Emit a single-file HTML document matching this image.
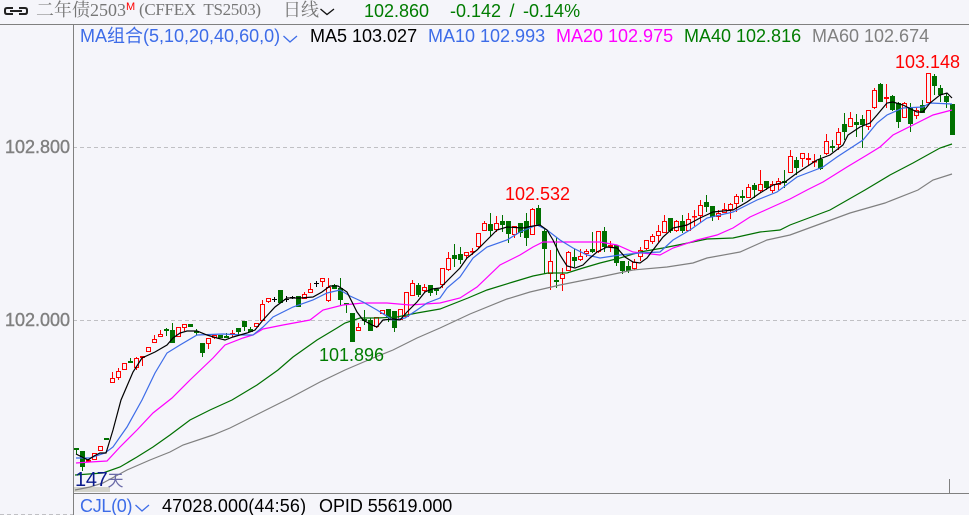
<!DOCTYPE html>
<html><head><meta charset="utf-8"><style>
html,body{margin:0;padding:0;background:#f5f5fa}
#p{position:relative;width:969px;height:515px;overflow:hidden;background:#f5f5fa;font-family:"Liberation Sans","Noto Sans CJK SC",sans-serif}
.t{position:absolute;white-space:pre;font-size:18px;line-height:20px;color:#000}
.s{font-family:"Liberation Serif","Noto Serif CJK SC",serif;color:#777}
.b{color:#3d6ce8}.m{color:#ff00ff}.g{color:#007c00}.y{color:#808080}.r{color:#f00}
svg{position:absolute;left:0;top:0}
</style></head><body><div id="p">
<svg width="969" height="515" viewBox="0 0 969 515" fill="none">
<path d="M73 147.500H969M73 320.500H969M0 514.500H73" stroke="#c0c0c4" stroke-width="1" stroke-dasharray="4 3"/>
<rect x="74" y="487" width="36" height="5" fill="#d4d4cc"/>
<path shape-rendering="crispEdges" stroke="#808080" d="M0 24.500H969M73.500 24V515M73 493.500H969M949.500 479V493"/>
<path d="M13 8H7Q5 8 5 10V12Q5 14 7 14H13M19 8H25Q27 8 27 10V12Q27 14 25 14H19M10 11H22" stroke="#222" stroke-width="2"/>
<path d="M320.500 9L327 14.500L334 9" stroke="#111" stroke-width="1.300"/>
<path d="M283.500 36L290 42L297 36" stroke="#3d6ce8" stroke-width="1.300"/>
<path d="M135.500 505L142 511L149 505" stroke="#3d6ce8" stroke-width="1.300"/>

<g shape-rendering="crispEdges">
<!-- green wicks -->
<path stroke="#007000" d="M76.500 448V454M82.500 451V471M130.500 358V363M166.500 328V336M172.500 323V343M196.500 329V335M202.500 343V357M226.500 333V338M238.500 328V335M244.500 321V331M250.500 327V332M334.500 284V289M340.500 278V305M346.500 303V313M364.500 310V325M370.500 318V331M388.500 309V322M394.500 311V332M418.500 283V297M430.500 285V296M436.500 289V295M454.500 244V267M460.500 247V264M490.500 213V237M502.500 215V232M508.500 221V243M520.500 223V237M526.500 213V246M538.500 205V225M544.500 228V274M556.500 237V288M574.500 249V267M592.500 232V253M604.500 227V252M616.500 245V266M622.500 261V274M628.500 261V273M670.500 218V233M682.500 215V233M706.500 195V212M712.500 206V221M742.500 190V202M754.500 183V198M766.500 181V190M784.500 170V188M796.500 157V175M820.500 155V170M832.500 140V152M844.500 113V140M856.500 114V137M862.500 115V148M880.500 83V102M892.500 95V111M898.500 102V128M910.500 103V132M922.500 100V113M934.500 74V95M940.500 85V102M946.500 93V108"/>
<!-- black crosses -->
<path stroke="#000" d="M272 299.500H277M274.500 297V302M284 299.500H289M286.500 296V302M290 297.500H295M292.500 296V299M314 283.500H319M316.500 281V287"/>
<!-- green bodies -->
<path fill="#007000" d="M74 448h5v2h-5zM80 451h5v16h-5zM104 438h5v2h-5zM128 361h5v2h-5zM164 329h5v2h-5zM170 330h5v13h-5zM188 324h5v3h-5zM194 331h5v2h-5zM200 343h5v10h-5zM218 335h5v3h-5zM224 336h5v2h-5zM236 328h5v4h-5zM242 321h5v6h-5zM248 329h5v3h-5zM278 290h5v13h-5zM296 296h5v11h-5zM332 285h5v4h-5zM338 288h5v12h-5zM344 303h5v2h-5zM350 313h5v29h-5zM362 319h5v2h-5zM368 320h5v11h-5zM386 309h5v8h-5zM392 311h5v17h-5zM416 285h5v10h-5zM428 285h5v8h-5zM434 289h5v2h-5zM452 255h5v4h-5zM458 254h5v6h-5zM488 224h5v7h-5zM500 221h5v4h-5zM506 221h5v13h-5zM518 223h5v10h-5zM524 221h5v17h-5zM536 208h5v17h-5zM542 231h5v18h-5zM554 280h5v2h-5zM572 257h5v4h-5zM590 249h5v3h-5zM602 231h5v16h-5zM614 245h5v18h-5zM620 261h5v10h-5zM626 266h5v5h-5zM668 218h5v13h-5zM680 221h5v10h-5zM704 202h5v5h-5zM710 206h5v11h-5zM740 196h5v2h-5zM752 185h5v5h-5zM764 181h5v7h-5zM782 181h5v2h-5zM794 160h5v8h-5zM818 159h5v10h-5zM830 146h5v2h-5zM842 124h5v8h-5zM854 122h5v3h-5zM860 119h5v6h-5zM878 84h5v18h-5zM890 96h5v14h-5zM896 103h5v19h-5zM908 108h5v16h-5zM920 105h5v8h-5zM932 76h5v10h-5zM938 88h5v7h-5zM944 96h5v6h-5zM950 104h5v31h-5z"/>
<!-- red wicks -->
<path stroke="#f00" d="M88.500 459V462M112.500 372V383M118.500 368V380M136.500 357V370M142.500 356V366M154.500 335V343M160.500 330V337M184.500 324V331M208.500 338V349M214.500 335V339M232.500 330V337M262.500 300V321M268.500 298V303M304.500 292V299M310.500 283V293M322.500 278V287M328.500 278V302M358.500 323V331M376.500 317V328M412.500 280V296M424.500 284V292M442.500 268V288M448.500 252V271M466.500 252V259M472.500 248V255M478.500 233V249M484.500 221V231M496.500 216V232M514.500 226V238M532.500 208V235M550.500 250V290M562.500 268V291M568.500 251V271M580.500 249V261M586.500 249V257M598.500 231V253M610.500 241V252M634.500 259V270M640.500 247V261M646.500 240V250M652.500 234V244M658.500 225V242M664.500 215V233M676.500 220V232M688.500 213V231M694.500 210V226M700.500 200V223M718.500 210V220M724.500 203V213M730.500 203V219M736.500 194V212M748.500 184V198M760.500 170V193M772.500 181V193M778.500 178V190M790.500 150V173M802.500 153V167M808.500 153V165M814.500 154V167M826.500 134V155M838.500 128V150M850.500 112V127M868.500 110V130M874.500 88V109M886.500 84V108M904.500 102V118M916.500 107V119M928.500 73V103"/>
<!-- red bodies -->
<path fill="#f5f5fa" stroke="#f00" d="M86.500 460.500h4v1h-4zM92.500 453.500h4v6h-4zM98.500 446.500h4v4h-4zM110.500 378.500h4v4h-4zM116.500 371.500h4v6h-4zM122.500 363.500h4v6h-4zM134.500 358.500h4v9h-4zM140.500 356.500h4v1h-4zM146.500 347.500h4v4h-4zM152.500 339.500h4v3h-4zM158.500 334.500h4v2h-4zM176.500 327.500h4v9h-4zM182.500 324.500h4v3h-4zM206.500 338.500h4v5h-4zM212.500 335.500h4v2h-4zM230.500 333.500h4v1h-4zM254.500 323.500h4v3h-4zM260.500 304.500h4v16h-4zM266.500 298.500h4v3h-4zM302.500 294.500h4v4h-4zM308.500 289.500h4v3h-4zM320.500 278.500h4v3h-4zM326.500 287.500h4v13h-4zM356.500 327.500h4v3h-4zM374.500 317.500h4v9h-4zM380.500 310.500h4v3h-4zM398.500 309.500h4v10h-4zM404.500 292.500h4v24h-4zM410.500 283.500h4v12h-4zM422.500 287.500h4v3h-4zM440.500 268.500h4v16h-4zM446.500 258.500h4v11h-4zM464.500 252.500h4v3h-4zM470.500 251.500h4v0.500h-4zM476.500 233.500h4v13h-4zM482.500 223.500h4v7h-4zM494.500 223.500h4v6h-4zM512.500 226.500h4v8h-4zM530.500 209.500h4v25h-4zM548.500 261.500h4v12h-4zM560.500 274.500h4v4h-4zM566.500 252.500h4v18h-4zM578.500 256.500h4v3h-4zM584.500 251.500h4v2h-4zM596.500 231.500h4v20h-4zM608.500 245.500h4v1h-4zM632.500 262.500h4v6h-4zM638.500 250.500h4v6h-4zM644.500 240.500h4v8h-4zM650.500 236.500h4v5h-4zM656.500 231.500h4v4h-4zM662.500 221.500h4v11h-4zM674.500 221.500h4v9h-4zM686.500 219.500h4v11h-4zM692.500 216.500h4v0.500h-4zM698.500 205.500h4v10h-4zM716.500 213.500h4v3h-4zM722.500 209.500h4v3h-4zM728.500 204.500h4v5h-4zM734.500 196.500h4v7h-4zM746.500 187.500h4v10h-4zM758.500 184.500h4v6h-4zM770.500 184.500h4v6h-4zM776.500 181.500h4v3h-4zM788.500 156.500h4v16h-4zM800.500 153.500h4v5h-4zM806.500 158.500h4v1h-4zM812.500 161.500h4v0.500h-4zM824.500 141.500h4v12h-4zM836.500 132.500h4v12h-4zM848.500 118.500h4v8h-4zM866.500 110.500h4v16h-4zM872.500 90.500h4v17h-4zM884.500 97.500h4v1h-4zM902.500 103.500h4v14h-4zM914.500 110.500h4v5h-4zM926.500 73.500h4v29h-4z"/>
</g>

<!-- MA60 -->
<polyline stroke="#808080" stroke-width="1.200" points="75,490 90,487 103,483 127,470 150,460 170,452 183,445 213,435 230,428 260,413 290,398 320,382 345,370 373,358 393,350 417,338 440,328 470,314 507,299 530,292 560,285 600,277 633,270 667,267 693,263 707,258 740,252 767,240 790,235 820,224 850,213 885,203 918,190 933,180 952,174"/>
<!-- MA40 -->
<polyline stroke="#007000" stroke-width="1.200" points="75,475 103,473 120,467 137,457 153,447 170,435 190,420 210,410 232,400 257,385 278,370 293,357 317,340 337,328 345,323 360,318 377,318 397,317 417,313 440,309 468,298 487,290 513,282 533,276 548,273 567,273 583,268 600,263 620,258 640,252 663,248 683,244 707,239 733,238 760,232 780,230 790,225 830,210 865,190 890,175 913,163 940,148 952,144"/>
<!-- MA20 -->
<polyline stroke="#ff00ff" stroke-width="1.200" points="76,463 90,462 107,461 120,447 137,430 153,413 172,398 190,380 213,358 225,345 243,338 253,335 263,329 283,325 310,320 323,310 343,305 363,303 387,303 410,305 440,303 460,298 477,287 500,265 520,255 533,247 543,242 560,242 600,242 617,245 633,252 660,255 673,248 697,240 717,235 733,228 750,217 770,208 790,199 807,190 823,182 847,167 867,155 880,147 893,135 913,125 933,115 952,110"/>
<!-- MA10 -->
<polyline stroke="#3d6ce8" stroke-width="1.200" points="76,458 90,458 105,453 113,447 127,427 142,400 155,373 167,353 180,345 197,335 223,334 243,335 253,335 263,327 273,317 293,307 313,300 327,293 340,290 350,296 363,302 377,310 393,320 405,318 417,310 427,303 440,298 447,288 460,277 473,258 487,247 507,240 520,232 537,225 547,230 560,240 573,248 587,255 600,258 620,255 640,253 660,252 673,240 690,230 707,218 733,212 757,200 777,192 797,177 823,167 837,157 863,140 877,123 887,115 903,108 923,107 930,103 952,104"/>
<!-- MA5 -->
<polyline stroke="#000" stroke-width="1.200" points="76,454 82,457 88,460 94,456 100,453 106,453 113,430 121,400 133,372 142,358 155,352 167,345 173,338 180,333 187,331 197,331 207,335 217,338 225,340 233,337 247,333 255,330 263,320 275,307 287,298 300,298 313,297 322,292 330,286 338,286 347,292 352,302 357,312 363,320 372,325 377,327 383,320 393,319 400,320 407,312 417,302 425,292 432,289 440,288 450,278 460,268 467,258 477,250 487,240 497,230 507,227 523,228 533,226 540,225 547,230 553,240 560,255 567,266 575,268 583,265 590,258 597,252 607,247 617,248 625,257 633,262 640,263 647,258 653,250 663,237 673,228 687,225 700,218 713,212 733,210 747,202 760,193 773,185 785,182 797,173 817,160 830,155 843,145 848,135 860,127 870,123 877,115 887,103 893,102 903,105 917,112 923,112 930,103 940,95 947,93 952,98"/>
</svg>

<div class="t s" style="left:36px;top:0;line-height:20px">二年债2503</div>
<div class="t r" style="left:126px;top:1px;font-size:11px;line-height:12px;color:#f00">M</div>
<div class="t s" style="left:139px;top:0;font-size:17px;letter-spacing:-0.3px">(CFFEX  TS2503)</div>
<div class="t s" style="left:283px;top:0">日线</div>
<div class="t g" style="left:364px;top:1px">102.860</div>
<div class="t g" style="left:450px;top:1px;word-spacing:3.500px">-0.142 / -0.14%</div>

<div class="t b" style="left:80px;top:26px">MA组合(5,10,20,40,60,0)</div>
<div class="t" style="left:310px;top:26px">MA5 103.027</div>
<div class="t b" style="left:428px;top:26px">MA10 102.993</div>
<div class="t m" style="left:556px;top:26px">MA20 102.975</div>
<div class="t g" style="left:684px;top:26px">MA40 102.816</div>
<div class="t y" style="left:812px;top:26px">MA60 102.674</div>

<div class="t y" style="left:5px;top:137px;-webkit-text-stroke:.4px #808080">102.800</div>
<div class="t y" style="left:5px;top:310px;-webkit-text-stroke:.4px #808080">102.000</div>

<div class="t r" style="left:895px;top:52px">103.148</div>
<div class="t r" style="left:505px;top:184px">102.532</div>
<div class="t g" style="left:319px;top:345px">101.896</div>

<div class="t" style="left:75px;top:470px;font-size:20px;color:#0a1a8c;letter-spacing:-0.300px">147<span style="color:#6a6aa8;font-size:16px;letter-spacing:0">天</span></div>

<div class="t b" style="left:80px;top:496px;letter-spacing:-0.300px">CJL(0)</div>
<div class="t" style="left:162px;top:496px;letter-spacing:0.130px">47028.000(44:56)</div>
<div class="t" style="left:319px;top:496px;letter-spacing:-0.060px">OPID 55619.000</div>
</div></body></html>
